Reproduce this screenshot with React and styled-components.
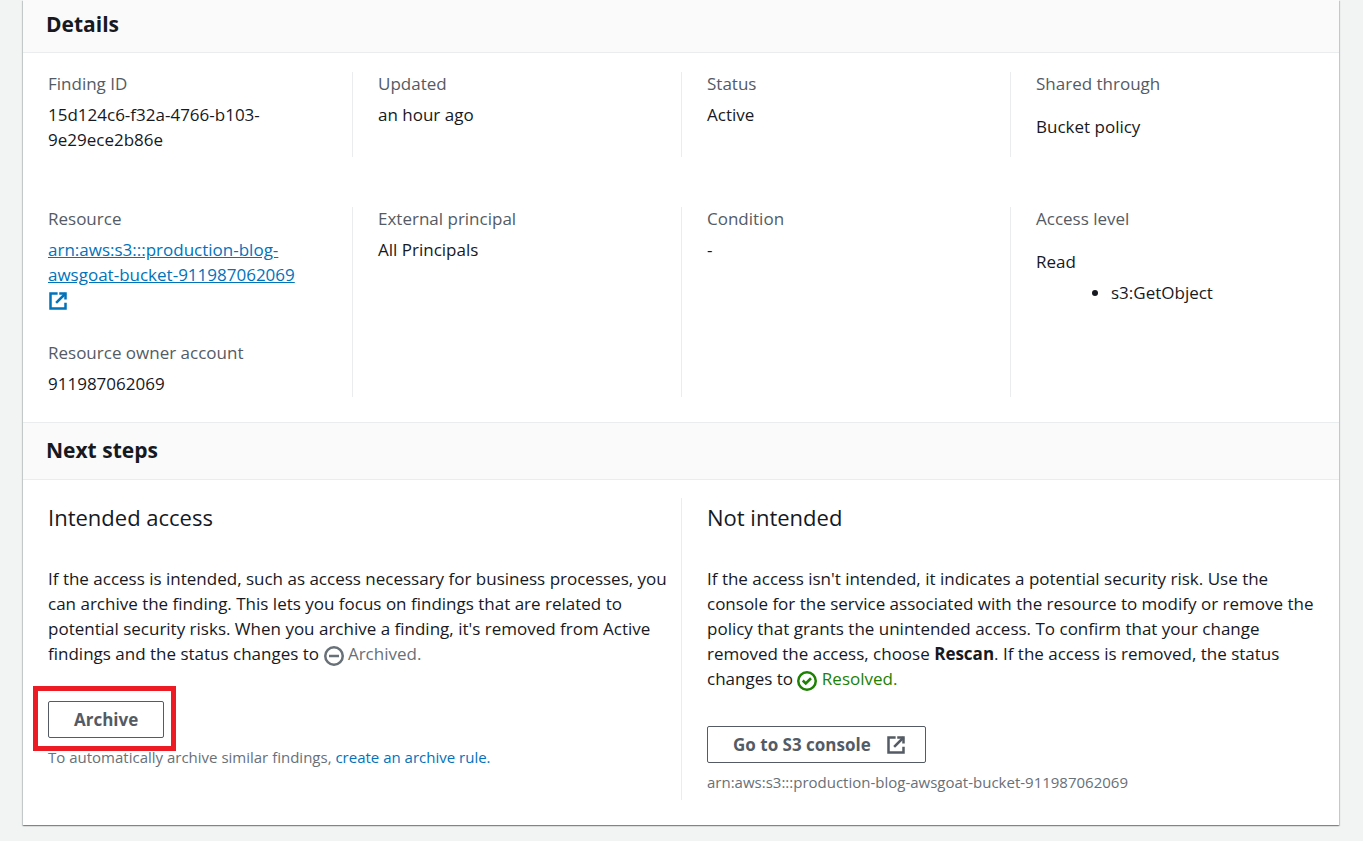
import React from "react";
import styled, { createGlobalStyle } from "styled-components";

const GlobalStyle = createGlobalStyle`
  *, *::before, *::after { box-sizing: border-box; }
  body {
    margin: 0;
    background: #f2f3f3;
    color: #16191f;
    font-family: "Open Sans", "Noto Sans", sans-serif;
    font-size: 17px;
    line-height: 25px;
  }
`;

const Page = styled.main`
  min-height: 100vh;
  padding: 0 24px 15px 23px;
`;

const Card = styled.div`
  background: #fff;
  box-shadow: 0 1px 1px rgba(0, 28, 36, 0.3), 1px 1px 1px rgba(0, 28, 36, 0.15), -1px 1px 1px rgba(0, 28, 36, 0.15);
`;

const SectionHeader = styled.header`
  display: flex;
  align-items: center;
  height: ${(p) => (p.$first ? "53px" : "58px")};
  padding: 0 23px;
  padding-bottom: ${(p) => (p.$first ? "5px" : "2px")};
  background: #fafafa;
  border-bottom: 1px solid #eaeded;
  border-top: ${(p) => (p.$first ? "none" : "1px solid #eaeded")};
`;

const SectionTitle = styled.h2`
  margin: 0;
  font-size: 21px;
  line-height: 28px;
  font-weight: 700;
`;

const DetailsBody = styled.div`
  display: flex;
  flex-direction: column;
  gap: 50px;
  padding: 19px 0 25px;
`;

const Columns = styled.div`
  display: grid;
  grid-template-columns: repeat(${(p) => p.$count}, minmax(0, 1fr));
`;

const Column = styled.div`
  padding: 0 14px ${(p) => p.$bottom || 0}px 25px;
  & + & { border-left: 1px solid #eaeded; }
`;

const Label = styled.div`
  color: #545b64;
  line-height: 23px;
  margin-bottom: ${(p) => (p.$wide ? 19 : 7)}px;
`;

const Field = styled.div`
  display: flow-root;
  & + & { margin-top: 26px; }
`;

const ResourceLink = styled.a`
  color: #0073bb;
`;

const Icon = styled.svg`
  display: ${(p) => (p.$block ? "block" : "inline")};
  margin: ${(p) => (p.$block ? "4px 0" : "0")};
  width: 20px;
  height: 20px;
  vertical-align: -6px;
  fill: none;
  stroke: currentColor;
  stroke-width: 2;
`;

const ActionList = styled.ul`
  margin: 6px 0 0;
  padding-left: 75px;
`;

const NextBody = styled.div`
  padding: 18px 0 25px;
`;

const SubTitle = styled.h3`
  margin: 0 0 30px;
  font-size: 22px;
  line-height: 38px;
  font-weight: 400;
`;

const Text = styled.p`
  margin: 0 0 35px;
`;

const Status = styled.span`
  color: ${(p) => (p.$ok ? "#1d8102" : "#687078")};
  white-space: nowrap;
`;

const Button = styled.button`
  display: inline-flex;
  align-items: center;
  gap: 15px;
  height: 37px;
  padding: 0 ${(p) => (p.$icon ? 19 : 25)}px 0 25px;
  border: 1px solid #545b64;
  border-radius: 2px;
  background: #fff;
  color: #545b64;
  font: inherit;
  font-weight: 700;
`;

const Highlight = styled.div`
  position: relative;
  width: fit-content;
  display: flex;
  &::after {
    content: "";
    position: absolute;
    inset: -15px -12px -13px -15px;
    border: 5px solid #ed1c24;
    pointer-events: none;
  }
`;

const Caption = styled.div`
  margin-top: 8px;
  padding-bottom: 7px;
  font-size: 15px;
  line-height: 22px;
  color: #687078;
`;

const CaptionLink = styled.a`
  color: #0073bb;
  text-decoration: none;
`;

function ExternalIcon({ block }) {
  return (
    <Icon $block={block} viewBox="0 0 16 16" aria-hidden="true">
      <path d="M9 2h5v4.700" />
      <path d="M6.500 9.500L14 2" />
      <path d="M14 9.300V14H2V2h5.700" />
    </Icon>
  );
}

function ArchivedIcon() {
  return (
    <Icon viewBox="0 0 16 16" aria-hidden="true">
      <circle cx="8" cy="8" r="7" />
      <path d="M4 8h8" />
    </Icon>
  );
}

function ResolvedIcon() {
  return (
    <Icon viewBox="0 0 16 16" aria-hidden="true">
      <circle cx="8" cy="8" r="7" />
      <path d="M4.600 7.600l2.400 2.400 4.200-4.200" />
    </Icon>
  );
}

function Item({ label, wide, children }) {
  return (
    <Field>
      <Label $wide={wide}>{label}</Label>
      {children}
    </Field>
  );
}

export default function App() {
  return (
    <>
      <GlobalStyle />
      <Page>
        <Card>
          <section>
            <SectionHeader $first>
              <SectionTitle>Details</SectionTitle>
            </SectionHeader>
            <DetailsBody>
              <Columns $count={4}>
                <Column $bottom={5}>
                  <Item label="Finding ID">15d124c6-f32a-4766-b103-9e29ece2b86e</Item>
                </Column>
                <Column><Item label="Updated">an hour ago</Item></Column>
                <Column><Item label="Status">Active</Item></Column>
                <Column><Item label="Shared through" wide>Bucket policy</Item></Column>
              </Columns>
              <Columns $count={4}>
                <Column $bottom={1}>
                  <Item label="Resource">
                    <ResourceLink href="#resource">
                      arn:aws:s3:::production-blog-awsgoat-bucket-911987062069
                      <ExternalIcon block />
                    </ResourceLink>
                  </Item>
                  <Item label="Resource owner account">911987062069</Item>
                </Column>
                <Column><Item label="External principal">All Principals</Item></Column>
                <Column><Item label="Condition">-</Item></Column>
                <Column>
                  <Item label="Access level" wide>
                    Read
                    <ActionList><li>s3:GetObject</li></ActionList>
                  </Item>
                </Column>
              </Columns>
            </DetailsBody>
          </section>
          <section>
            <SectionHeader>
              <SectionTitle>Next steps</SectionTitle>
            </SectionHeader>
            <NextBody>
              <Columns $count={2}>
                <Column>
                  <SubTitle>Intended access</SubTitle>
                  <Text>
                    If the access is intended, such as access necessary for business processes, you can
                    archive the finding. This lets you focus on findings that are related to potential
                    security risks. When you archive a finding, it's removed from Active findings and the
                    status changes to <Status><ArchivedIcon /> Archived.</Status>
                  </Text>
                  <Highlight><Button type="button">Archive</Button></Highlight>
                  <Caption>
                    To automatically archive similar findings,{" "}
                    <CaptionLink href="#archive-rule">create an archive rule.</CaptionLink>
                  </Caption>
                </Column>
                <Column>
                  <SubTitle>Not intended</SubTitle>
                  <Text>
                    If the access isn't intended, it indicates a potential security risk. Use the console
                    for the service associated with the resource to modify or remove the policy that grants
                    the unintended access. To confirm that your change removed the access, choose{" "}
                    <b>Rescan</b>. If the access is removed, the status changes to{" "}
                    <Status $ok><ResolvedIcon /> Resolved.</Status>
                  </Text>
                  <Button type="button" $icon>Go to S3 console <ExternalIcon /></Button>
                  <Caption>arn:aws:s3:::production-blog-awsgoat-bucket-911987062069</Caption>
                </Column>
              </Columns>
            </NextBody>
          </section>
        </Card>
      </Page>
    </>
  );
}
